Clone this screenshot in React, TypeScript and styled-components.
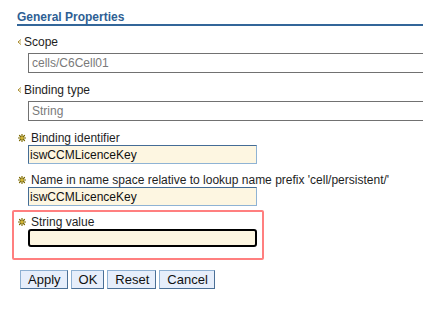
import React from "react";
import styled, { createGlobalStyle } from "styled-components";

const Global = createGlobalStyle`
  html, body { margin: 0; padding: 0; background: #ffffff; }
  body { font-family: "Liberation Sans", Arial, sans-serif; font-size: 12px; color: #222; }
`;

const Page = styled.div`
  width: 423px;
  height: 327px;
  overflow: hidden;
  padding: 10px 0 0 17px;
  box-sizing: border-box;
`;

const Title = styled.div`
  font-weight: bold;
  font-size: 12px;
  line-height: 14px;
  color: #2f5f94;
  border-bottom: 2px solid #336699;
  margin-bottom: 9px;
`;

const Group = styled.div<{ $gap: number; $after: number }>`
  display: flex;
  flex-direction: column;
  gap: ${(p) => p.$gap}px;
  margin-bottom: ${(p) => p.$after}px;
`;

const Label = styled.div<{ $required?: boolean }>`
  display: flex;
  align-items: center;
  height: 14px;
  line-height: 14px;
  font-size: 12px;
  color: #1e1e1e;
  padding-left: ${(p) => (p.$required ? 1 : 0)}px;
  gap: ${(p) => (p.$required ? 5 : 2)}px;
`;

const Readonly = styled.div`
  margin-left: 11px;
  width: 420px;
  height: 20px;
  box-sizing: border-box;
  border: 1px solid #717171;
  border-right: none;
  color: #7a7a7a;
  font-size: 12px;
  line-height: 18px;
  padding-left: 3px;
  background: #fff;
`;

const TextInput = styled.input<{ $focus?: boolean }>`
  margin-left: 11px;
  width: 229px;
  height: ${(p) => (p.$focus ? 18 : 19)}px;
  box-sizing: border-box;
  background: #fdf6e1;
  font-family: "Liberation Sans", Arial, sans-serif;
  font-size: 12px;
  color: #111;
  padding: 0 1px;
  outline: none;
  border: ${(p) => (p.$focus ? "2px solid #000" : "1px solid #8fb3d4")};
  border-top-color: ${(p) => (p.$focus ? "#000" : "#446c95")};
  border-left-color: ${(p) => (p.$focus ? "#000" : "#446c95")};
  border-radius: ${(p) => (p.$focus ? 3 : 0)}px;
`;

const Highlight = styled.div`
  margin-left: -5px;
  width: 252px;
  height: 50px;
  box-sizing: border-box;
  border: 2px solid #ff7f7f;
  border-radius: 2px;
  padding: 3px 0 0 3px;
  display: flex;
  flex-direction: column;
  margin-bottom: 10px;
`;

const Buttons = styled.div`
  display: flex;
  gap: 3px;
  margin-left: 3px;
`;

const Button = styled.button`
  height: 19px;
  box-sizing: border-box;
  padding: 0 6px 0 7px;
  font-family: "Liberation Sans", Arial, sans-serif;
  font-size: 13px;
  line-height: 17px;
  color: #111;
  background: #e6eefb;
  border: 1px solid #8eb0d2;
  border-right-color: #4a6f96;
  border-bottom-color: #4a6f96;
  border-radius: 0;
`;

const Bullet = () => (
  <svg width="5" height="6" viewBox="0 0 5 6">
    <path d="M4 0.5 L1 3 L4 5.5" fill="none" stroke="#a88a2a" strokeWidth="1" />
    <circle cx="3.2" cy="3" r="0.7" fill="#c9b25a" />
  </svg>
);

const Star = () => (
  <svg width="8" height="8" viewBox="0 0 8 8">
    <g stroke="#7d6a00" strokeWidth="1.2" strokeLinecap="round">
      <line x1="4" y1="0.5" x2="4" y2="7.5" />
      <line x1="0.5" y1="4" x2="7.5" y2="4" />
      <line x1="1.5" y1="1.5" x2="6.5" y2="6.5" />
      <line x1="6.5" y1="1.5" x2="1.5" y2="6.5" />
    </g>
    <circle cx="4" cy="4" r="1.3" fill="#d8b830" />
  </svg>
);

export default function App() {
  return (
    <>
      <Global />
      <Page>
        <Title>General Properties</Title>
        <Group $gap={4} $after={10}>
          <Label>
            <Bullet />
            Scope
          </Label>
          <Readonly>cells/C6Cell01</Readonly>
        </Group>
        <Group $gap={4} $after={10}>
          <Label>
            <Bullet />
            Binding type
          </Label>
          <Readonly>String</Readonly>
        </Group>
        <Group $gap={0} $after={9}>
          <Label $required>
            <Star />
            Binding identifier
          </Label>
          <TextInput defaultValue="iswCCMLicenceKey" />
        </Group>
        <Group $gap={0} $after={4}>
          <Label $required>
            <Star />
            Name in name space relative to lookup name prefix 'cell/persistent/'
          </Label>
          <TextInput defaultValue="iswCCMLicenceKey" />
        </Group>
        <Highlight>
          <Label $required>
            <Star />
            String value
          </Label>
          <TextInput $focus defaultValue="" />
        </Highlight>
        <Buttons>
          <Button>Apply</Button>
          <Button>OK</Button>
          <Button>Reset</Button>
          <Button>Cancel</Button>
        </Buttons>
      </Page>
    </>
  );
}
